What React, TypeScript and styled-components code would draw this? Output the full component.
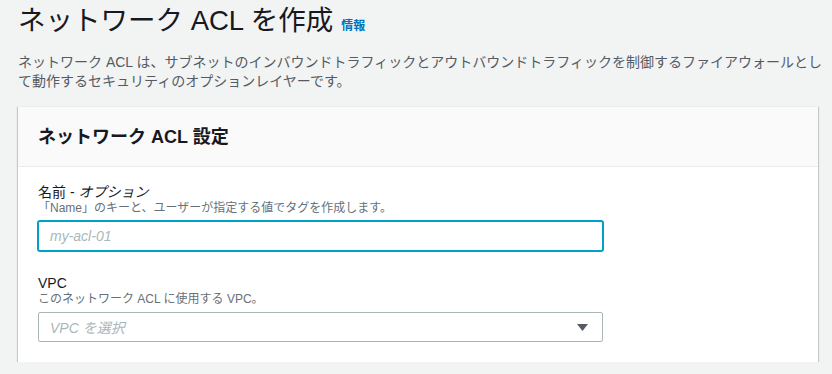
import React from "react";
import styled, { createGlobalStyle } from "styled-components";

const GlobalStyle = createGlobalStyle`
  body {
    margin: 0;
    background: #f2f3f3;
    font-family: "Liberation Sans", "Noto Sans CJK JP", sans-serif;
    color: #16191f;
  }
`;

const Page = styled.div`
  padding: 3px 10px 0 18px;
`;

const TitleRow = styled.div`
  display: flex;
  align-items: baseline;
  gap: 8px;
  height: 36px;
`;

const Title = styled.h1`
  margin: 0;
  font-size: 27.5px;
  font-weight: 400;
  line-height: 36px;
  color: #16191f;
`;

const InfoLink = styled.a`
  font-size: 12px;
  font-weight: 700;
  color: #0073bb;
  text-decoration: none;
`;

const Description = styled.p`
  margin: 14px 0 0;
  font-size: 14px;
  line-height: 19px;
  color: #545b64;
`;

const Card = styled.section`
  margin-top: 15px;
  background: #fff;
  border-top: 1px solid #eaeded;
  box-shadow: 0 1px 1px 0 rgba(0, 28, 36, 0.3), 1px 1px 1px 0 rgba(0, 28, 36, 0.15),
    -1px 1px 1px 0 rgba(0, 28, 36, 0.15);
  width: 800px;
`;

const CardHeader = styled.header`
  display: flex;
  align-items: center;
  height: 59px;
  padding: 0 20px;
  background: #fafafa;
  border-bottom: 1px solid #eaeded;
`;

const CardTitle = styled.h2`
  margin: 0;
  font-size: 18px;
  font-weight: 700;
  line-height: 22px;
  color: #16191f;
`;

const CardBody = styled.div`
  display: flex;
  flex-direction: column;
  gap: 23px;
  padding: 16px 20px 20px;
`;

const Field = styled.div`
  display: flex;
  flex-direction: column;
`;

const Label = styled.label`
  font-size: 14px;
  line-height: 18px;
  color: #16191f;
  em {
    font-style: italic;
  }
`;

const Hint = styled.div`
  font-size: 12px;
  line-height: 14px;
  color: #687078;
`;

const Control = styled.div<{ $focused?: boolean }>`
  margin-top: 6px;
  width: 565px;
  height: 30px;
  box-sizing: border-box;
  border: 1px solid ${(p) => (p.$focused ? "#00a1c9" : "#aab7b8")};
  border-radius: 2px;
  box-shadow: ${(p) => (p.$focused ? "0 0 0 1px #00a1c9" : "none")};
  background: #fff;
  display: flex;
  align-items: center;
  padding: 0 14px 0 11px;
`;

const Placeholder = styled.span`
  flex: 1;
  font-size: 14px;
  font-style: italic;
  color: #aab7b8;
`;

const Caret = () => (
  <svg width="11" height="7" viewBox="0 0 11 7">
    <path d="M0 0h11L5.5 7z" fill="#545b64" />
  </svg>
);

export default function App() {
  return (
    <>
      <GlobalStyle />
      <Page>
        <TitleRow>
          <Title>ネットワーク ACL を作成</Title>
          <InfoLink href="#">情報</InfoLink>
        </TitleRow>
        <Description>
          ネットワーク ACL は、サブネットのインバウンドトラフィックとアウトバウンドトラフィックを制御するファイアウォールとして動作するセキュリティのオプションレイヤーです。
        </Description>
        <Card>
          <CardHeader>
            <CardTitle>ネットワーク ACL 設定</CardTitle>
          </CardHeader>
          <CardBody>
            <Field>
              <Label>
                名前 - <em>オプション</em>
              </Label>
              <Hint>「Name」のキーと、ユーザーが指定する値でタグを作成します。</Hint>
              <Control $focused>
                <Placeholder>my-acl-01</Placeholder>
              </Control>
            </Field>
            <Field>
              <Label>VPC</Label>
              <Hint>このネットワーク ACL に使用する VPC。</Hint>
              <Control>
                <Placeholder>VPC を選択</Placeholder>
                <Caret />
              </Control>
            </Field>
          </CardBody>
        </Card>
      </Page>
    </>
  );
}
